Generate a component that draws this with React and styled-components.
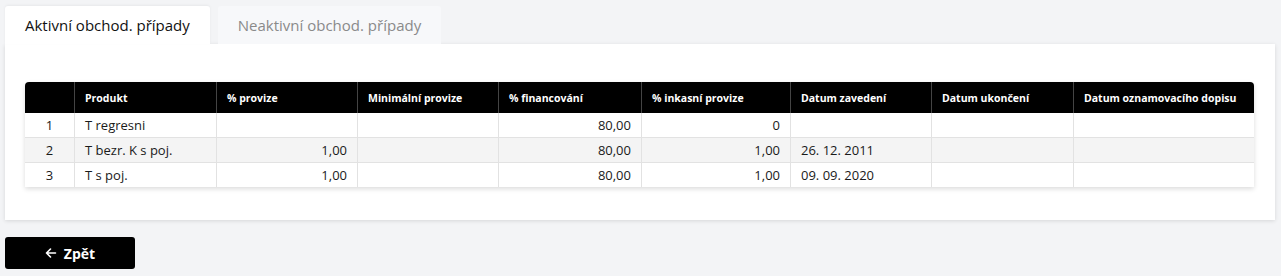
import React from 'react';
import styled, { createGlobalStyle } from 'styled-components';

const GlobalStyle = createGlobalStyle`
  html, body {
    margin: 0;
    padding: 0;
    background: #f3f4f6;
    font-family: "Open Sans", Lato, sans-serif;
    color: #1a1a1a;
  }
`;

const Page = styled.div`
  padding: 6px 6px 0 5px;
`;

const Tabs = styled.div`
  display: flex;
  gap: 8px;
`;

const Tab = styled.div`
  height: 38px;
  padding: 0 20px;
  display: flex;
  align-items: center;
  font-size: 15px;
  border-radius: 3px 3px 0 0;
  background: ${p => (p.active ? '#ffffff' : '#f7f8fa')};
  color: ${p => (p.active ? '#111' : '#8a8a8a')};
  box-shadow: ${p => (p.active ? '0 -1px 3px rgba(0,0,0,0.05)' : 'none')};
`;

const Panel = styled.div`
  background: #fff;
  padding: 38px 21px 33px 20px;
  box-shadow: 0 1px 4px rgba(0, 0, 0, 0.12);
`;

const Table = styled.table`
  width: 100%;
  border-collapse: separate;
  border-spacing: 0;
  box-shadow: 0 2px 5px rgba(0, 0, 0, 0.14);
  border-radius: 4px 4px 0 0;
  font-size: 13px;
`;

const Th = styled.th`
  background: #000;
  color: #fff;
  font-size: 10.5px;
  font-weight: 700;
  text-align: left;
  height: 31px;
  padding: 0 10px;
  border-left: 1px solid #444;
  white-space: nowrap;
  &:first-child {
    border-left: none;
    border-top-left-radius: 4px;
  }
  &:last-child {
    border-top-right-radius: 4px;
  }
`;

const Tr = styled.tr`
  background: ${p => (p.striped ? '#f4f4f4' : '#fff')};
`;

const Td = styled.td`
  height: 24px;
  padding: 0 10px;
  border-left: 1px solid #e2e2e2;
  border-top: 1px solid #e2e2e2;
  text-align: ${p => p.align || 'left'};
  color: #1a1a1a;
  white-space: nowrap;
  &:first-child {
    border-left: none;
  }
  tr:first-child > & {
    border-top: none;
  }
`;

const BackButton = styled.button`
  margin-top: 17px;
  width: 130px;
  height: 32px;
  background: #000;
  color: #fff;
  border: none;
  border-radius: 3px;
  font-family: inherit;
  font-size: 14px;
  font-weight: 700;
  display: flex;
  align-items: center;
  justify-content: center;
  gap: 7px;
`;

const columns = [
  { label: '', width: 49 },
  { label: 'Produkt', width: 142 },
  { label: '% provize', width: 141 },
  { label: 'Minimální provize', width: 141 },
  { label: '% financování', width: 143 },
  { label: '% inkasní provize', width: 149 },
  { label: 'Datum zavedení', width: 141 },
  { label: 'Datum ukončení', width: 142 },
  { label: 'Datum oznamovacího dopisu' },
];

const rows = [
  ['1', 'T regresni', '', '', '80,00', '0', '', '', ''],
  ['2', 'T bezr. K s poj.', '1,00', '', '80,00', '1,00', '26. 12. 2011', '', ''],
  ['3', 'T s poj.', '1,00', '', '80,00', '1,00', '09. 09. 2020', '', ''],
];

const aligns = ['center', 'left', 'right', 'right', 'right', 'right', 'left', 'left', 'left'];

function ArrowLeft() {
  return (
    <svg width="12" height="12" viewBox="0 0 12 12" fill="none" stroke="#fff" strokeWidth="1.6" strokeLinecap="round" strokeLinejoin="round">
      <path d="M10.5 6H1.5M5.5 2L1.5 6l4 4" />
    </svg>
  );
}

export default function App() {
  return (
    <Page>
      <GlobalStyle />
      <Tabs>
        <Tab active>Aktivní obchod. případy</Tab>
        <Tab>Neaktivní obchod. případy</Tab>
      </Tabs>
      <Panel>
        <Table>
          <colgroup>
            {columns.map((c, i) => (
              <col key={i} style={c.width ? { width: c.width } : undefined} />
            ))}
          </colgroup>
          <thead>
            <tr>
              {columns.map((c, i) => (
                <Th key={i}>{c.label}</Th>
              ))}
            </tr>
          </thead>
          <tbody>
            {rows.map((r, ri) => (
              <Tr key={ri} striped={ri % 2 === 1}>
                {r.map((v, ci) => (
                  <Td key={ci} align={aligns[ci]}>
                    {v}
                  </Td>
                ))}
              </Tr>
            ))}
          </tbody>
        </Table>
      </Panel>
      <BackButton>
        <ArrowLeft />
        Zpět
      </BackButton>
    </Page>
  );
}
